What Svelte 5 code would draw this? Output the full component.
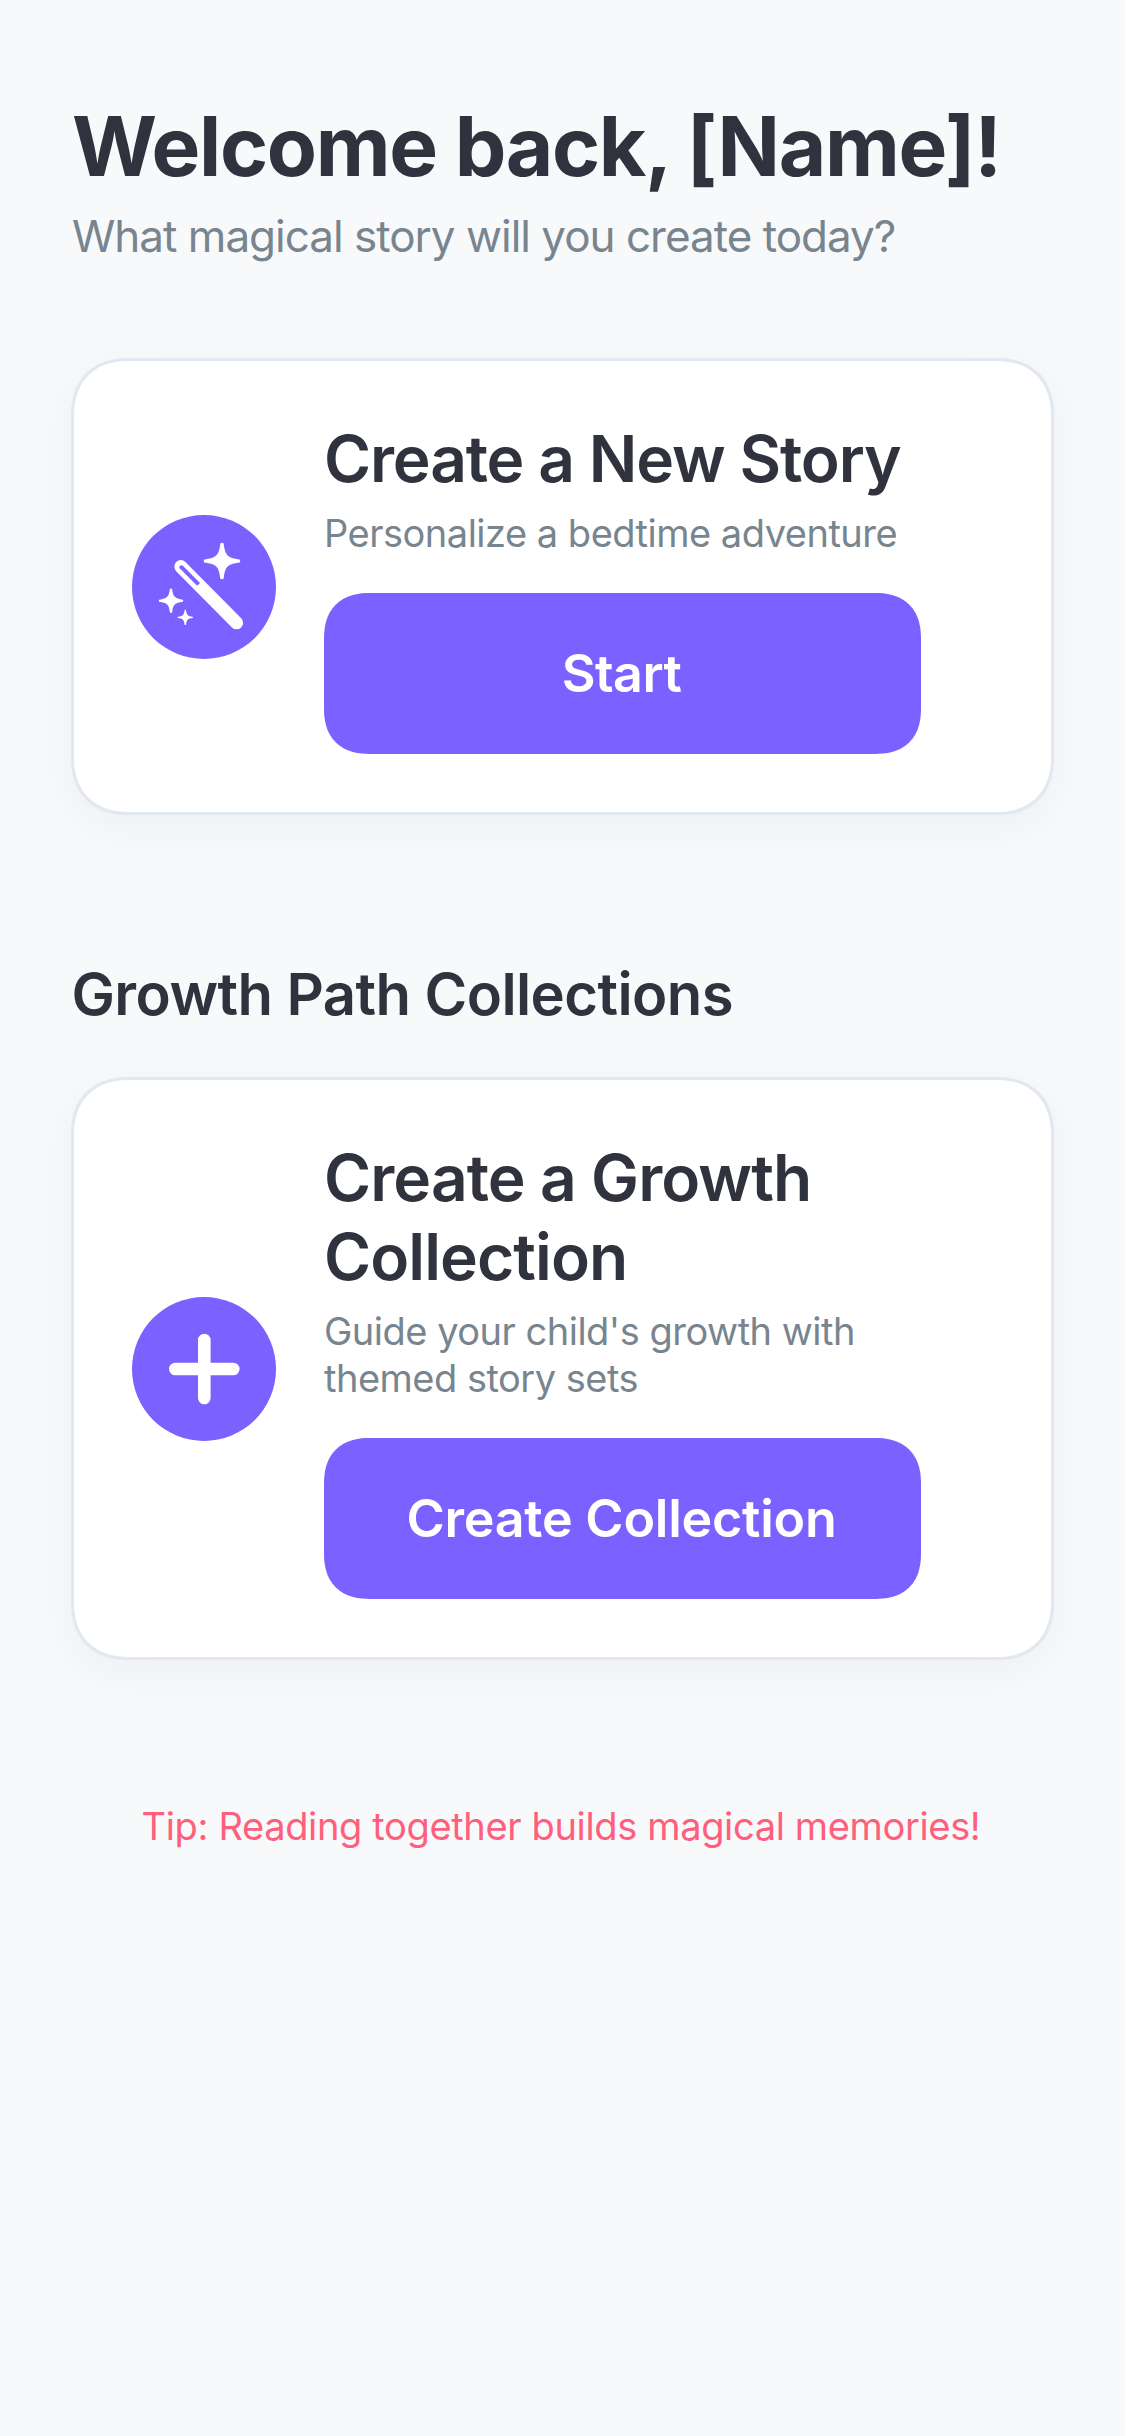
<script>
  // Four-pointed sparkle with blunt tips and concave sides
  const star = (cx, cy, r) => {
    const t = r * 0.09;
    const a = r * 0.18;
    const b = r * 0.31;
    const e = r + t * 0.6;
    return [
      `M${cx - t} ${cy - r}`,
      `Q${cx} ${cy - e} ${cx + t} ${cy - r}`,
      `C${cx + a} ${cy - b} ${cx + b} ${cy - a} ${cx + r} ${cy - t}`,
      `Q${cx + e} ${cy} ${cx + r} ${cy + t}`,
      `C${cx + b} ${cy + a} ${cx + a} ${cy + b} ${cx + t} ${cy + r}`,
      `Q${cx} ${cy + e} ${cx - t} ${cy + r}`,
      `C${cx - a} ${cy + b} ${cx - b} ${cy + a} ${cx - r} ${cy + t}`,
      `Q${cx - e} ${cy} ${cx - r} ${cy - t}`,
      `C${cx - b} ${cy - a} ${cx - a} ${cy - b} ${cx - t} ${cy - r}Z`
    ].join('');
  };
</script>

<main class="screen">
  <header>
    <h1>Welcome back, [Name]!</h1>
    <p class="lead">What magical story will you create today?</p>
  </header>

  <section class="card first">
    <svg class="badge" viewBox="0 0 144 144" aria-hidden="true">
      <circle class="disc" cx="72" cy="72" r="72" />
      <path class="wand" d="M48.8 51.6L104.6 107.8" />
      <path class="slot" d="M49.4 52.2L66.6 69.4" />
      <circle class="disc" cx="49.4" cy="52.2" r="2" />
      <path class="spark" d={star(90, 46, 17.8)} />
      <path class="spark" d={star(39, 85.7, 11.9)} />
      <path class="spark" d={star(53.3, 102.4, 7.5)} />
    </svg>
    <div class="body">
      <h2>Create a New Story</h2>
      <p class="note">Personalize a bedtime adventure</p>
      <button type="button">Start</button>
    </div>
  </section>

  <h3>Growth Path Collections</h3>

  <section class="card">
    <svg class="badge" viewBox="0 0 144 144" aria-hidden="true">
      <circle class="disc" cx="72" cy="72" r="72" />
      <path class="plus" d="M72.3 43v58M43.3 72h58" />
    </svg>
    <div class="body">
      <h2 class="wide">Create a Growth<br />Collection</h2>
      <p class="note">Guide your child's growth with<br />themed story sets</p>
      <button type="button" class="long">Create Collection</button>
    </div>
  </section>

  <p class="tip">Tip: Reading together builds magical memories!</p>
</main>

<style>
  :global(body) {
    background: #f8f9fb;
  }

  .screen {
    box-sizing: border-box;
    width: 1125px;
    min-height: 2436px;
    padding: 97px 71px 0;
    background: #f8f9fb;
    color: #30323d;
    font-family: Inter, "Liberation Sans", sans-serif;
  }

  h1, h2, h3, p {
    margin: 0;
    white-space: nowrap;
  }

  h1 {
    padding-left: 1px;
    font-size: 82px;
    font-weight: 700;
    line-height: 100px;
    letter-spacing: -1.38px;
  }

  .lead {
    margin-top: 12px;
    padding-left: 1px;
    color: #78858f;
    font-size: 44px;
    line-height: 54px;
    letter-spacing: -1px;
  }

  .card {
    box-sizing: border-box;
    display: flex;
    align-items: center;
    gap: 48px;
    width: 983px;
    padding: 58px;
    border: 3px solid #e2e8f0;
    border-radius: 58px;
    corner-shape: superellipse(1.2);
    background: #fff;
    box-shadow: 0 12px 48px rgba(0, 0, 0, 0.045);
  }

  .first {
    margin-top: 95px;
  }

  .badge {
    flex: none;
    width: 144px;
    height: 144px;
  }

  .disc {
    fill: #7b61ff;
  }

  .wand, .slot, .plus {
    fill: none;
    stroke-linecap: round;
  }

  .wand {
    stroke: #fff;
    stroke-width: 13px;
  }

  .slot {
    stroke: #7b61ff;
    stroke-width: 4px;
    stroke-linecap: butt;
  }

  .plus {
    stroke: #fff;
    stroke-width: 12.6px;
  }

  .spark {
    fill: #fff;
  }

  .body {
    display: flex;
    flex-direction: column;
  }

  h2 {
    font-size: 64px;
    font-weight: 600;
    line-height: 79px;
    letter-spacing: -1.15px;
  }

  .wide {
    letter-spacing: -0.9px;
  }

  .note {
    margin-top: 12px;
    color: #78858f;
    font-size: 38px;
    line-height: 47px;
    letter-spacing: -0.5px;
  }

  button {
    width: 597px;
    height: 161px;
    margin-top: 36px;
    padding: 0 2px 0 0;
    border: 0;
    border-radius: 46px;
    corner-shape: superellipse(1.25);
    background: #7b61ff;
    color: #fff;
    font: 600 52px Inter, "Liberation Sans", sans-serif;
    letter-spacing: -0.5px;
  }

  .long {
    letter-spacing: -0.24px;
  }

  h3 {
    margin-top: 143px;
    margin-bottom: 47px;
    padding-left: 0.5px;
    font-size: 58px;
    font-weight: 600;
    line-height: 72px;
    letter-spacing: -0.58px;
  }

  .tip {
    margin-top: 143px;
    padding-right: 3px;
    color: #ff5f7c;
    font-size: 38px;
    line-height: 47px;
    letter-spacing: -0.35px;
    text-align: center;
  }
</style>
